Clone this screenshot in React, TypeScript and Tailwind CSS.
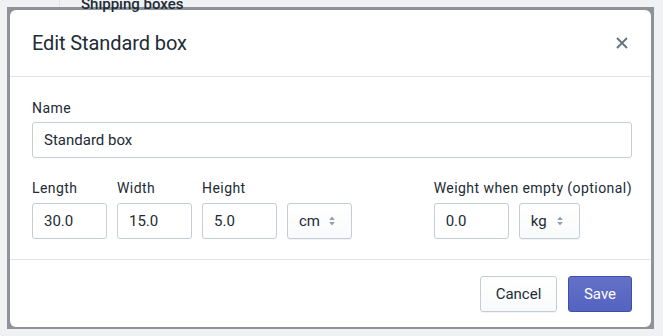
import React from "react";

function Arrows() {
  return (
    <svg width="6" height="10" viewBox="0 0 6 10" className="ml-auto">
      <path d="M3 0.5 L5.8 4 L0.2 4 Z" fill="#919eab" />
      <path d="M3 9.5 L5.8 6 L0.2 6 Z" fill="#919eab" />
    </svg>
  );
}

function Label({ children, mb = "mb-[5px]" }: { children: React.ReactNode; mb?: string }) {
  return (
    <div className={`text-[14px] leading-[20px] tracking-[0.44px] ${mb} text-[#212b36] whitespace-nowrap`}>{children}</div>
  );
}

function Input({ value, w = "w-[75px]" }: { value: string; w?: string }) {
  return (
    <div className={`${w} h-[36px] border border-[#c4cdd5] rounded-[3px] px-[11px] flex items-center text-[15px] text-[#212b36] bg-white`}>
      {value}
    </div>
  );
}

function Field({ label, value }: { label: string; value: string }) {
  return (
    <div className="flex flex-col">
      <Label>{label}</Label>
      <Input value={value} />
    </div>
  );
}

function Select({ value, w }: { value: string; w: string }) {
  return (
    <div className={`${w} h-[36px] border border-[#c4cdd5] rounded-[3px] pl-[11px] pr-[16px] flex items-center text-[15px] text-[#212b36] bg-gradient-to-b from-white to-[#f9fafb] shadow-[0_1px_0_0_rgba(22,29,37,0.05)]`}>
      <span>{value}</span>
      <Arrows />
    </div>
  );
}

export default function App() {
  return (
    <div
      className="w-[663px] h-[336px] bg-[#f0f1f2] pt-[7px] pl-[7px] overflow-hidden relative"
      style={{ fontFamily: "Roboto, 'Liberation Sans', sans-serif" }}
    >
      <div className="absolute left-[59px] top-0 w-px h-[7px] bg-[#dfe3e8]" />
      <div className="w-[647px] h-[322px] bg-[#8e9399] pt-[3px] pl-[3px] pr-[3px] pb-[2px]">
        <div className="w-full h-full bg-white rounded-[6px] flex flex-col">
          <div className="h-[67px] shrink-0 flex items-center pl-[22px] pr-[19px] border-b border-[#dfe3e8]">
            <div className="text-[20px] text-[#212b36] tracking-[-0.1px] mt-[-1px]">Edit Standard box</div>
            <svg width="12" height="12" viewBox="0 0 12 12" className="ml-auto mr-[4px] mt-[-1px]">
              <path d="M1 1 L11 11 M11 1 L1 11" stroke="#637381" strokeWidth="1.9" />
            </svg>
          </div>
          <div className="pl-[22px] pr-[19px] pt-[21px] h-[183px] shrink-0 border-b border-[#dfe3e8]">
            <Label mb="mb-[4px]">Name</Label>
            <div className="h-[36px] border border-[#c4cdd5] rounded-[3px] px-[11px] flex items-center text-[15px] text-[#212b36]">
              Standard box
            </div>
            <div className="flex mt-[20px]">
              <div className="flex gap-[10px] items-end">
                <Field label="Length" value="30.0" />
                <Field label="Width" value="15.0" />
                <Field label="Height" value="5.0" />
                <Select value="cm" w="w-[65px]" />
              </div>
              <div className="ml-auto flex flex-col">
                <Label>Weight when empty (optional)</Label>
                <div className="flex gap-[10px]">
                  <Input value="0.0" />
                  <Select value="kg" w="w-[61px]" />
                </div>
              </div>
            </div>
          </div>
          <div className="flex-1 flex items-start justify-end gap-[11px] pl-[22px] pr-[19px] pt-[16px]">
            <div className="w-[77px] h-[36px] rounded-[3px] border border-[#c4cdd5] bg-gradient-to-b from-white to-[#f9fafb] flex items-center justify-center text-[15px] text-[#212b36] shadow-[0_1px_0_0_rgba(22,29,37,0.05)]">
              Cancel
            </div>
            <div className="w-[64px] h-[36px] rounded-[3px] border border-[#3f4eae] bg-gradient-to-b from-[#6371c7] to-[#5563c1] flex items-center justify-center text-[15px] text-white">
              Save
            </div>
          </div>
        </div>
      </div>
      <div className="absolute left-[81px] top-[-7px] text-[15px] font-medium text-[#212b36] whitespace-nowrap">Shipping boxes</div>
    </div>
  );
}
